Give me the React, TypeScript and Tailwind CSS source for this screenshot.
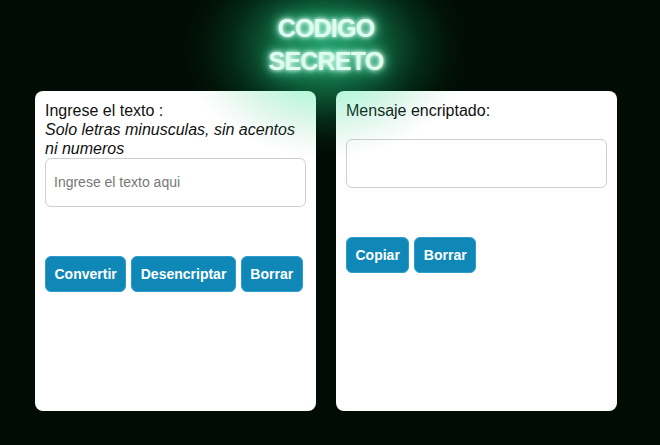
import React from "react";

const Btn = ({ children }: { children: React.ReactNode }) => (
  <button className="h-[36px] rounded-[6px] border border-[#2f9ccb] bg-[#0f88b8] px-[8.5px] text-[14px] font-bold text-white [font-family:'Liberation_Sans',Arial,sans-serif]">
    {children}
  </button>
);

export default function App() {
  return (
    <div className="relative h-[445px] w-[660px] overflow-hidden bg-[#010c04] [font-family:'Liberation_Sans',Arial,sans-serif]">
      <div className="flex flex-col items-center pt-[12px]">
        <h1 className="relative z-20 ml-[-8px] text-center text-[25px] font-bold leading-[33px] tracking-[-0.8px] text-[#dcfff0] [text-shadow:0_0_4px_#ffffff,0_0_10px_#9fffe0,0_0_18px_#40ffb0]">
          CODIGO
          <br />
          SECRETO
        </h1>
      </div>
      <div className="mt-[13px] flex gap-[20px] pl-[35px]">
        <div className="h-[320px] w-[281px] rounded-[8px] bg-white p-[10px] text-[16px] leading-[19px] text-[#111]">
          <p>Ingrese el texto :</p>
          <p className="italic">Solo letras minusculas, sin acentos ni numeros</p>
          <div className="flex h-[49px] w-[261px] items-center rounded-[6px] border border-[#cfcfcf] px-[8px] text-[14px] text-[#777]">
            Ingrese el texto aqui
          </div>
          <div className="mt-[49px] flex gap-[5px]">
            <Btn>Convertir</Btn>
            <Btn>Desencriptar</Btn>
            <Btn>Borrar</Btn>
          </div>
        </div>
        <div className="h-[320px] w-[281px] rounded-[8px] bg-white p-[10px] text-[16px] leading-[19px] text-[#111]">
          <p>Mensaje encriptado:</p>
          <div className="mt-[19px] h-[49px] w-[261px] rounded-[6px] border border-[#cfcfcf]" />
          <div className="mt-[49px] flex gap-[5px]">
            <Btn>Copiar</Btn>
            <Btn>Borrar</Btn>
          </div>
        </div>
      </div>
      <div className="pointer-events-none absolute left-[181px] top-[-62px] z-10 h-[220px] w-[290px] bg-[radial-gradient(closest-side,rgba(60,255,170,0.5)_0%,rgba(40,235,150,0.38)_35%,rgba(20,200,120,0.16)_65%,rgba(10,160,90,0.05)_85%,rgba(0,0,0,0)_100%)]" />
    </div>
  );
}
